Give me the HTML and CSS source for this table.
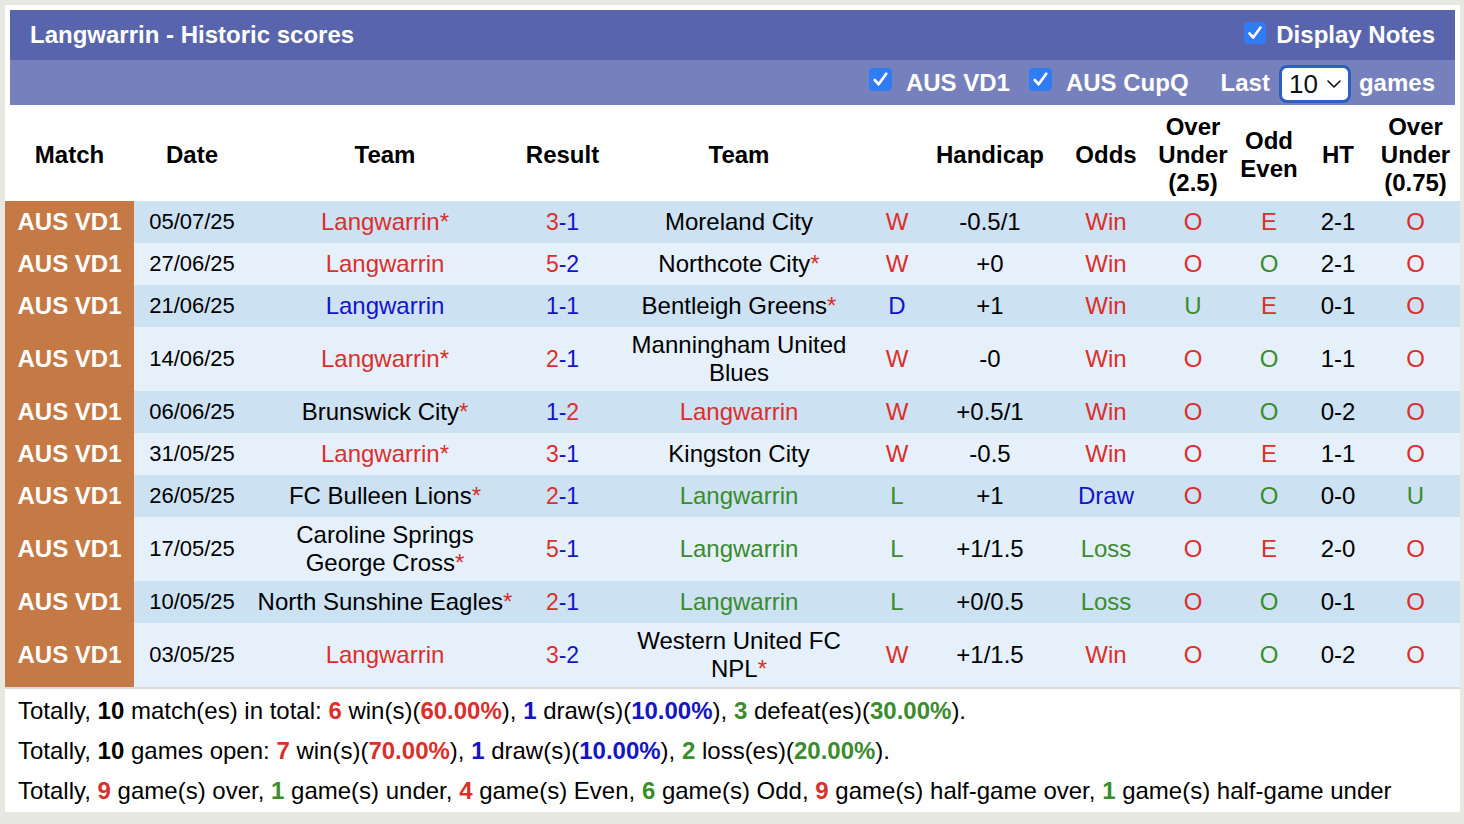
FILE: index.html
```html
<!DOCTYPE html>
<html lang="en">
<head>
<meta charset="utf-8">
<title>Langwarrin - Historic scores</title>
<link rel="stylesheet" href="styles.css">
</head>
<body>
<div class="panel">
  <div class="titlebar">
    <span class="title">Langwarrin - Historic scores</span>
    <label class="opt opt-notes">
      <svg class="cb" viewBox="0 0 22 22" width="22" height="22"><rect x="0" y="0" width="22" height="22" rx="4" fill="#2f7cf4"/><path d="M5.5 11.5 L9.2 15.5 L16.5 5.5" fill="none" stroke="#fff" stroke-width="2.6" stroke-linecap="round" stroke-linejoin="round"/></svg>
      <span>Display Notes</span>
    </label>
  </div>
  <div class="subbar">
    <label class="opt">
      <svg class="cb" viewBox="0 0 22 22" width="23" height="23"><rect x="0" y="0" width="22" height="22" rx="4" fill="#2f7cf4"/><path d="M5.5 11.5 L9.2 15.5 L16.5 5.5" fill="none" stroke="#fff" stroke-width="2.6" stroke-linecap="round" stroke-linejoin="round"/></svg>
      <span>AUS VD1</span>
    </label>
    <label class="opt opt2">
      <svg class="cb" viewBox="0 0 22 22" width="23" height="23"><rect x="0" y="0" width="22" height="22" rx="4" fill="#2f7cf4"/><path d="M5.5 11.5 L9.2 15.5 L16.5 5.5" fill="none" stroke="#fff" stroke-width="2.6" stroke-linecap="round" stroke-linejoin="round"/></svg>
      <span>AUS CupQ</span>
    </label>
    <span class="last">Last</span>
    <span class="select"><span>10</span><svg viewBox="0 0 14 8" width="14" height="8"><path d="M1 1 L7 7 L13 1" fill="none" stroke="#111" stroke-width="1.6" stroke-linecap="round" stroke-linejoin="round"/></svg></span>
    <span class="games">games</span>
  </div>

  <table class="scores">
    <colgroup>
      <col class="c-match"><col class="c-date"><col class="c-team"><col class="c-res"><col class="c-team2"><col class="c-wl"><col class="c-hc"><col class="c-odds"><col class="c-ou"><col class="c-oe"><col class="c-ht"><col class="c-ou2">
    </colgroup>
    <thead>
      <tr>
        <th>Match</th><th>Date</th><th>Team</th><th>Result</th><th>Team</th><th></th><th>Handicap</th><th>Odds</th><th>Over<br>Under<br>(2.5)</th><th>Odd<br>Even</th><th>HT</th><th>Over<br>Under<br>(0.75)</th>
      </tr>
    </thead>
    <tbody>
      <tr class="dk">
        <td class="lg">AUS VD1</td><td class="date">05/07/25</td><td class="r">Langwarrin*</td><td class="res"><span class="r">3</span>-1</td><td>Moreland City</td><td class="r">W</td><td>-0.5/1</td><td class="r">Win</td><td class="r">O</td><td class="r">E</td><td>2-1</td><td class="r">O</td>
      </tr>
      <tr class="lt">
        <td class="lg">AUS VD1</td><td class="date">27/06/25</td><td class="r">Langwarrin</td><td class="res"><span class="r">5</span>-2</td><td>Northcote City<span class="r">*</span></td><td class="r">W</td><td>+0</td><td class="r">Win</td><td class="r">O</td><td class="g">O</td><td>2-1</td><td class="r">O</td>
      </tr>
      <tr class="dk">
        <td class="lg">AUS VD1</td><td class="date">21/06/25</td><td class="b">Langwarrin</td><td class="res">1-1</td><td>Bentleigh Greens<span class="r">*</span></td><td class="b">D</td><td>+1</td><td class="r">Win</td><td class="g">U</td><td class="r">E</td><td>0-1</td><td class="r">O</td>
      </tr>
      <tr class="lt">
        <td class="lg">AUS VD1</td><td class="date">14/06/25</td><td class="r">Langwarrin*</td><td class="res"><span class="r">2</span>-1</td><td>Manningham United Blues</td><td class="r">W</td><td>-0</td><td class="r">Win</td><td class="r">O</td><td class="g">O</td><td>1-1</td><td class="r">O</td>
      </tr>
      <tr class="dk">
        <td class="lg">AUS VD1</td><td class="date">06/06/25</td><td>Brunswick City<span class="r">*</span></td><td class="res">1-<span class="r">2</span></td><td class="r">Langwarrin</td><td class="r">W</td><td>+0.5/1</td><td class="r">Win</td><td class="r">O</td><td class="g">O</td><td>0-2</td><td class="r">O</td>
      </tr>
      <tr class="lt">
        <td class="lg">AUS VD1</td><td class="date">31/05/25</td><td class="r">Langwarrin*</td><td class="res"><span class="r">3</span>-1</td><td>Kingston City</td><td class="r">W</td><td>-0.5</td><td class="r">Win</td><td class="r">O</td><td class="r">E</td><td>1-1</td><td class="r">O</td>
      </tr>
      <tr class="dk">
        <td class="lg">AUS VD1</td><td class="date">26/05/25</td><td>FC Bulleen Lions<span class="r">*</span></td><td class="res"><span class="r">2</span>-1</td><td class="g">Langwarrin</td><td class="g">L</td><td>+1</td><td class="b">Draw</td><td class="r">O</td><td class="g">O</td><td>0-0</td><td class="g">U</td>
      </tr>
      <tr class="lt">
        <td class="lg">AUS VD1</td><td class="date">17/05/25</td><td>Caroline Springs George Cross<span class="r">*</span></td><td class="res"><span class="r">5</span>-1</td><td class="g">Langwarrin</td><td class="g">L</td><td>+1/1.5</td><td class="g">Loss</td><td class="r">O</td><td class="r">E</td><td>2-0</td><td class="r">O</td>
      </tr>
      <tr class="dk">
        <td class="lg">AUS VD1</td><td class="date">10/05/25</td><td>North Sunshine Eagles<span class="r">*</span></td><td class="res"><span class="r">2</span>-1</td><td class="g">Langwarrin</td><td class="g">L</td><td>+0/0.5</td><td class="g">Loss</td><td class="r">O</td><td class="g">O</td><td>0-1</td><td class="r">O</td>
      </tr>
      <tr class="lt">
        <td class="lg">AUS VD1</td><td class="date">03/05/25</td><td class="r">Langwarrin</td><td class="res"><span class="r">3</span>-2</td><td class="narrow">Western United FC NPL<span class="r">*</span></td><td class="r">W</td><td>+1/1.5</td><td class="r">Win</td><td class="r">O</td><td class="g">O</td><td>0-2</td><td class="r">O</td>
      </tr>
    </tbody>
  </table>

  <div class="summary">
    <div>Totally, <b>10</b> match(es) in total: <b class="r">6</b> win(s)(<b class="r">60.00%</b>), <b class="b">1</b> draw(s)(<b class="b">10.00%</b>), <b class="g">3</b> defeat(es)(<b class="g">30.00%</b>).</div>
    <div>Totally, <b>10</b> games open: <b class="r">7</b> win(s)(<b class="r">70.00%</b>), <b class="b">1</b> draw(s)(<b class="b">10.00%</b>), <b class="g">2</b> loss(es)(<b class="g">20.00%</b>).</div>
    <div>Totally, <b class="r">9</b> game(s) over, <b class="g">1</b> game(s) under, <b class="r">4</b> game(s) Even, <b class="g">6</b> game(s) Odd, <b class="r">9</b> game(s) half-game over, <b class="g">1</b> game(s) half-game under</div>
  </div>
</div>
</body>
</html>
```
FILE: styles.css
```css
html, body {
  margin: 0;
  padding: 0;
  background: #e8e8e3;
}
body {
  font-family: "Liberation Sans", Arial, Helvetica, sans-serif;
  font-size: 24px;
  color: #000;
}
.panel {
  margin: 5px 0 0 5px;
  width: 1455px;
  background: #fff;
  padding-top: 5px;
  padding-bottom: 1px;
}
.titlebar {
  margin: 0 5px;
  height: 50px;
  background: #5865ad;
  color: #fff;
  font-weight: bold;
  display: flex;
  align-items: center;
  justify-content: space-between;
  padding: 0 20px;
}
.subbar {
  margin: 0 5px;
  height: 45px;
  background: #7580bc;
  color: #fff;
  font-weight: bold;
  display: flex;
  align-items: center;
  justify-content: flex-end;
  padding: 0 20px;
}
.opt {
  display: flex;
  align-items: center;
}
.opt .cb {
  margin-right: 14px;
  margin-bottom: 6px;
}
.opt-notes .cb {
  margin-right: 10px;
  margin-bottom: 4px;
}
.opt2 {
  margin-left: 19px;
}
.last {
  margin-left: 32px;
}
.select {
  margin-left: 9px;
  width: 52px;
  height: 32px;
  border: 3px solid #2d5fbd;
  border-radius: 8px;
  background: #fff;
  color: #111;
  font-weight: normal;
  font-size: 26px;
  display: flex;
  align-items: center;
  justify-content: space-between;
  padding: 0 7px 0 7px;
  box-sizing: content-box;
  margin-top: 2px;
}
.select span {
  line-height: 1;
}
.games {
  margin-left: 8px;
}

.scores {
  width: 1455px;
  border-collapse: collapse;
  table-layout: fixed;
}
.c-match { width: 129px; }
.c-date { width: 116px; }
.c-team { width: 270px; }
.c-res { width: 85px; }
.c-team2 { width: 268px; }
.c-wl { width: 48px; }
.c-hc { width: 138px; }
.c-odds { width: 94px; }
.c-ou { width: 80px; }
.c-oe { width: 72px; }
.c-ht { width: 66px; }
.c-ou2 { width: 89px; }

.scores th {
  height: 96px;
  box-sizing: border-box;
  font-weight: bold;
  line-height: 28px;
  padding: 4px 2px 0 2px;
  text-align: center;
  vertical-align: middle;
}
.scores tbody tr {
  height: 42px;
}
.scores td {
  padding: 4px 3px;
  line-height: 28px;
  text-align: center;
  vertical-align: middle;
}
.scores td.narrow {
  padding: 4px 10px;
}
.dk { background: #cce1f2; }
.lt { background: #e5f0fa; }
.scores td.lg {
  background: #c57944;
  color: #fff;
  font-weight: bold;
  padding-left: 0;
  padding-right: 0;
}
.scores td.date {
  font-size: 22px;
}
.scores td.res {
  font-size: 23px;
  color: #1414c8;
}
.r { color: #dc2f2b; }
.b { color: #1414c8; }
.g { color: #3a8c2c; }

.summary {
  border-top: 2px solid #dadada;
  padding: 2px 0 0 13px;
}
.summary div {
  line-height: 40px;
  white-space: nowrap;
}
.summary b { font-weight: bold; }
```
